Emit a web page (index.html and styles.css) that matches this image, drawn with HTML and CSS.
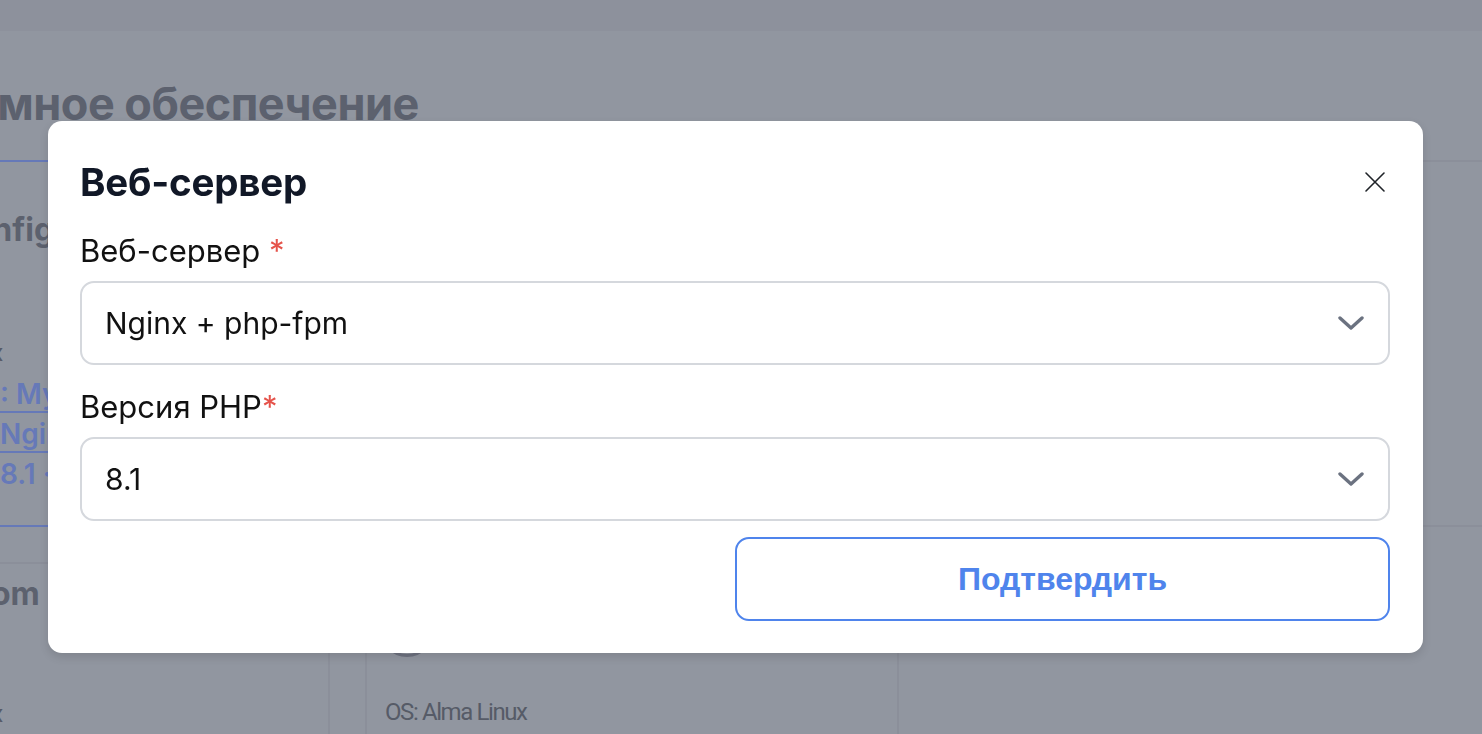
FILE: index.html
```html
<!DOCTYPE html>
<html lang="ru">
<head>
<meta charset="UTF-8">
<meta name="viewport" content="width=device-width, initial-scale=1.0">
<title>Программное обеспечение</title>
<link rel="stylesheet" href="styles.css">
</head>
<body>
<div id="page">
  <div class="topbar"></div>
  <h1 class="page-title">Программное обеспечение</h1>
  <div class="cards">
    <div class="card card-active">
      <div class="card-title">Configuration</div>
      <div class="card-line">OS: Linux</div>
      <div class="card-props">
        <span class="prop-key">DB</span><a class="prop-value">: MySQL 8.0</a>
        <span class="prop-key">Web</span><a class="prop-value">Nginx + php-fpm</a>
        <span class="prop-key">PHP</span><span class="prop-value plain">8.1 · 8.2</span>
      </div>
    </div>
    <div class="card"></div>
    <div class="card"></div>
    <div class="card card-low">
      <div class="card-title custom">Custom</div>
      <div class="card-line">OS: Linux</div>
    </div>
    <div class="card card-low">
      <div class="card-icon"></div>
      <div class="card-line os">OS: Alma Linux</div>
    </div>
  </div>
</div>

<!-- Modal -->
<div id="server-modal">
  <div class="modal-content">
    <div class="modal-header">
      <h2>Веб-сервер</h2>
      <span class="close-icon">
        <svg width="24" height="24" viewBox="0 0 24 24" fill="none" stroke="#1f2328" stroke-width="1.6" stroke-linecap="round"><path d="M3 3l18 18M21 3L3 21"/></svg>
      </span>
    </div>
    <label class="field-label" for="server-select">Веб-сервер <span class="required">*</span></label>
    <div class="select-box" id="server-select">
      <span>Nginx + php-fpm</span>
      <svg class="chevron" width="26" height="14" viewBox="0 0 26 14" fill="none" stroke="#6b7280" stroke-width="3.4" stroke-linecap="round" stroke-linejoin="round"><path d="M2 2l11 10L24 2"/></svg>
    </div>
    <label class="field-label" for="php-select">Версия PHP<span class="required">*</span></label>
    <div class="select-box" id="php-select">
      <span>8.1</span>
      <svg class="chevron" width="26" height="14" viewBox="0 0 26 14" fill="none" stroke="#6b7280" stroke-width="3.4" stroke-linecap="round" stroke-linejoin="round"><path d="M2 2l11 10L24 2"/></svg>
    </div>
    <div class="modal-footer">
      <button id="confirm-button">Подтвердить</button>
    </div>
  </div>
</div>
</body>
</html>
```

FILE: styles.css
```css
html, body {
  margin: 0;
  height: 100%;
  overflow: hidden;
}
body {
  font-family: Inter, "Noto Sans", sans-serif;
  background-color: #9196a0;
}
#page {
  margin-left: -204px;
}
.topbar {
  height: 31px;
  background-color: #8d919c;
}
.page-title {
  margin: 47px 0 0 3px;
  font-size: 45px;
  line-height: 52px;
  font-weight: 700;
  color: #5c616e;
  letter-spacing: -0.5px;
}
.cards {
  display: grid;
  grid-template-columns: 534px 534px 600px;
  column-gap: 35px;
  row-gap: 35px;
  margin-top: 30px;
}
.card {
  height: 367px;
  border: 2px solid #8b8f9a;
  border-radius: 10px;
  box-sizing: border-box;
  overflow: hidden;
}
.card-active {
  border-color: #6679b8;
}
.card-low {
  height: 240px;
}
.card-title {
  margin-top: 48px;
  padding-left: 151px;
  font-size: 32px;
  line-height: 40px;
  font-weight: 700;
  color: #5c616e;
  white-space: nowrap;
}
.card-title.custom {
  margin-top: 10px;
  padding-left: 120px;
}
.card-line {
  margin-top: 89px;
  padding-left: 112px;
  font-family: Roboto, sans-serif;
  font-size: 24px;
  letter-spacing: -0.8px;
  color: #565b67;
}
.card-low .card-line {
  margin-top: 86px;
}
.card-props {
  display: grid;
  grid-template-columns: 202px auto;
  row-gap: 4px;
  margin-top: 9px;
  font-size: 28px;
  line-height: 36px;
  font-weight: 600;
  color: #6679b8;
  white-space: nowrap;
}
.prop-key {
  text-align: right;
  padding-right: 40px;
}
.prop-value {
  text-decoration: underline;
  text-decoration-thickness: 2px;
  text-underline-offset: 7px;
}
.prop-value.plain {
  text-decoration: none;
}
.card-icon {
  margin: 37px 0 0 12px;
  width: 50px;
  height: 50px;
  border-radius: 50%;
  border: 3px solid #6e7280;
}
.card-low .card-line.os {
  margin-top: 41px;
  padding-left: 18px;
  letter-spacing: -1.4px;
}

/* Modal */
#server-modal {
  position: fixed;
  top: 0;
  left: 0;
  width: 100%;
  height: 100%;
}
.modal-content {
  box-sizing: border-box;
  width: 1375px;
  margin: 121px 0 0 48px;
  padding: 38px 33px 32px 32px;
  background-color: white;
  border-radius: 14px;
  box-shadow: 0 4px 10px rgba(0, 0, 0, 0.12);
}
.modal-header {
  display: flex;
  justify-content: space-between;
  align-items: center;
  margin-bottom: 28px;
}
.modal-header h2 {
  margin: 0;
  font-size: 38.5px;
  line-height: 46px;
  font-weight: 700;
  color: #111827;
  letter-spacing: -0.2px;
}
.close-icon {
  display: flex;
  width: 24px;
  height: 24px;
  margin-right: 3px;
  cursor: pointer;
}
.field-label {
  display: block;
  font-size: 31px;
  line-height: 36px;
  color: #111;
  margin-bottom: 12px;
}
.required {
  color: #e5534b;
}
.select-box {
  display: flex;
  justify-content: space-between;
  align-items: center;
  box-sizing: border-box;
  height: 84px;
  padding: 0 24px 0 23px;
  border: 2px solid #d5d8dd;
  border-radius: 14px;
  font-size: 30px;
  color: #111;
  margin-bottom: 24px;
}
#php-select {
  margin-bottom: 16px;
}
.modal-footer {
  display: flex;
  justify-content: flex-end;
}
#confirm-button {
  width: 655px;
  height: 84px;
  background: white;
  border: 2px solid #4f84ec;
  border-radius: 14px;
  font-family: "Liberation Sans", Arial, sans-serif;
  font-size: 32px;
  font-weight: 700;
  color: #4f84ec;
  cursor: pointer;
}
```
